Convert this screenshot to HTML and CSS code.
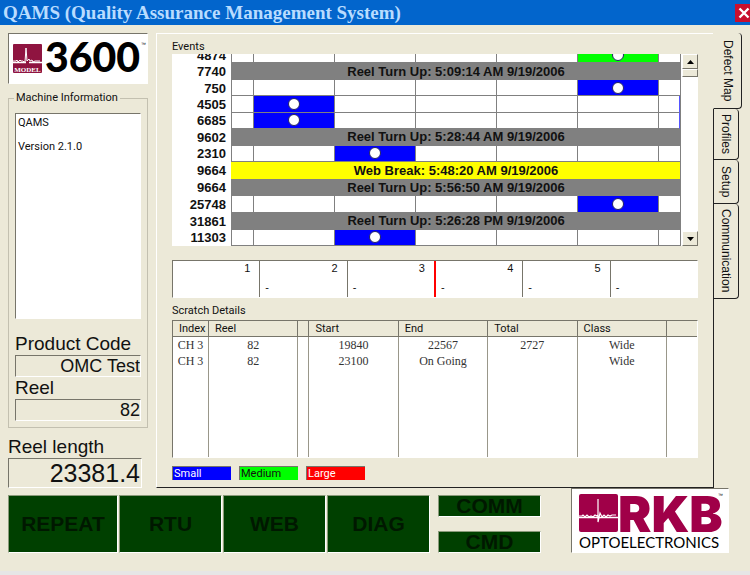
FILE: index.html
```html
<!DOCTYPE html>
<html lang="en">
<head>
<meta charset="utf-8">
<title>QAMS (Quality Assurance Management System)</title>
<link rel="stylesheet" href="styles.css">
</head>
<body>
<header class="titlebar">
  <h1>QAMS (Quality Assurance Management System)</h1>
  <button class="close" type="button" aria-label="Close"><svg viewBox="0 0 18 18" width="18" height="18"><path d="M4.5 4.5l9 9M13.5 4.5l-9 9" stroke="#fff" stroke-width="2.4" fill="none"/></svg></button>
</header>
<main class="main">
  <aside class="side">
    <div class="model sunken">
      <svg viewBox="0 0 138 48" width="138" height="48">
        <rect x="4" y="10" width="29" height="29" rx="1" fill="#8f1440"/>
        <path d="M4 27h3l1-1 1 2 2-2 1 1h2l1 1 1 0 1-14 1 13 2-2 1 2 2-1 1 2 2-1 1 0h4" fill="none" stroke="#fff" stroke-width="1"/>
        <path d="M4 28.500h13M20 28.500h13" stroke="#fff" stroke-width="1.500"/>
        <text x="18.500" y="37.500" class="model-tag">MODEL</text>
        <text x="36" y="38" class="model-num">3600</text>
        <text x="132" y="12" class="tm">™</text>
      </svg>
    </div>
    <fieldset class="info">
      <legend>Machine Information</legend>
      <textarea class="sunken" aria-label="Machine Information" readonly>QAMS

Version 2.1.0</textarea>
      <label for="code">Product Code</label>
      <input class="sunken" id="code" value="OMC Test" readonly>
      <label for="reel">Reel</label>
      <input class="sunken" id="reel" value="82" readonly>
    </fieldset>
    <div class="length">
      <label for="length">Reel length</label>
      <input class="sunken" id="length" value="23381.4" readonly>
    </div>
  </aside>
  <section class="panel">
    <h2>Events</h2>
    <div class="events">
      <table>
        <colgroup><col class="c-pos"><col class="c-edge"><col><col><col><col><col><col class="c-edge"></colgroup>
        <tbody>
          <tr><th>4874</th><td></td><td></td><td></td><td></td><td></td><td class="medium"><i></i></td><td></td></tr>
          <tr><th>7740</th><td class="turn" colspan="7">Reel Turn Up: 5:09:14 AM 9/19/2006</td></tr>
          <tr><th>750</th><td></td><td></td><td></td><td></td><td></td><td class="small"><i></i></td><td></td></tr>
          <tr><th>4505</th><td></td><td class="small"><i></i></td><td></td><td></td><td></td><td></td><td class="hit"></td></tr>
          <tr><th>6685</th><td></td><td class="small"><i></i></td><td></td><td></td><td></td><td></td><td class="hit"></td></tr>
          <tr><th>9602</th><td class="turn" colspan="7">Reel Turn Up: 5:28:44 AM 9/19/2006</td></tr>
          <tr><th>2310</th><td></td><td></td><td class="small"><i></i></td><td></td><td></td><td></td><td></td></tr>
          <tr><th>9664</th><td class="break" colspan="7">Web Break: 5:48:20 AM 9/19/2006</td></tr>
          <tr><th>9664</th><td class="turn" colspan="7">Reel Turn Up: 5:56:50 AM 9/19/2006</td></tr>
          <tr><th>25748</th><td></td><td></td><td></td><td></td><td></td><td class="small"><i></i></td><td></td></tr>
          <tr><th>31861</th><td class="turn" colspan="7">Reel Turn Up: 5:26:28 PM 9/19/2006</td></tr>
          <tr><th>11303</th><td></td><td></td><td class="small"><i></i></td><td></td><td></td><td></td><td></td></tr>
        </tbody>
      </table>
      <div class="scroll">
        <button type="button" aria-label="Scroll up"><svg viewBox="0 0 7 4" width="7" height="4"><path d="M0 4L3.500 0 7 4z"/></svg></button>
        <div class="thumb"></div>
        <button type="button" class="down" aria-label="Scroll down"><svg viewBox="0 0 7 4" width="7" height="4"><path d="M0 0h7L3.500 4z"/></svg></button>
      </div>
    </div>
    <ol class="ruler sunken">
      <li><b>1</b></li>
      <li><b>2</b><span>-</span></li>
      <li><b>3</b><span>-</span></li>
      <li class="now"><b>4</b><span>-</span></li>
      <li><b>5</b><span>-</span></li>
      <li><span>-</span></li>
    </ol>
    <h2>Scratch Details</h2>
    <table class="details sunken">
      <colgroup><col class="d-index"><col><col class="d-gap"><col><col><col><col><col class="d-end"></colgroup>
      <thead><tr><th>Index</th><th>Reel</th><th></th><th>Start</th><th>End</th><th>Total</th><th>Class</th><th></th></tr></thead>
      <tbody>
        <tr><td>CH 3</td><td>82</td><td></td><td>19840</td><td>22567</td><td>2727</td><td>Wide</td><td></td></tr>
        <tr><td>CH 3</td><td>82</td><td></td><td>23100</td><td>On Going</td><td></td><td>Wide</td><td></td></tr>
        <tr class="rest"><td></td><td></td><td></td><td></td><td></td><td></td><td></td><td></td></tr>
      </tbody>
    </table>
    <ul class="legend">
      <li class="small">Small</li>
      <li class="medium">Medium</li>
      <li class="large">Large</li>
    </ul>
  </section>
  <nav class="tabs">
    <button type="button" class="active">Defect Map</button>
    <button type="button">Profiles</button>
    <button type="button">Setup</button>
    <button type="button">Communication</button>
  </nav>
</main>
<footer class="bottom">
  <div class="status">
    <button type="button">REPEAT</button>
    <button type="button">RTU</button>
    <button type="button">WEB</button>
    <button type="button">DIAG</button>
  </div>
  <div class="comms">
    <button type="button">COMM</button>
    <button type="button">CMD</button>
  </div>
  <div class="brand sunken">
    <svg viewBox="0 0 156 63" width="156" height="63">
      <rect x="7" y="5" width="39" height="38" rx="2" fill="#a00048"/>
      <path d="M7 27h3l1-1 2 2 2-2 2 2 2-1 2 1 2-2 2 1 1-1V10v23l2-9 2 4 2-2 2 2 2-2 2 1 2-1h4" fill="none" stroke="#fff" stroke-width="1.200"/>
      <path d="M7 28.500h39" stroke="#fff" stroke-width="1.500"/>
      <text x="46" y="43" class="rkb">RKB</text>
      <text x="146" y="8" class="tm">™</text>
      <text x="7" y="59" class="opto">OPTOELECTRONICS</text>
    </svg>
  </div>
</footer>
</body>
</html>
```
FILE: styles.css
```css
* { box-sizing: border-box; }

body {
  margin: 0;
  min-height: 100vh;
  display: flex;
  flex-direction: column;
  background: #ece9d8;
  border-bottom: 4px solid #e6e6e6;
  color: #111;
  font: 11px/14px Roboto, "Liberation Sans", sans-serif;
  overflow: hidden;
}

button, input, textarea { font: inherit; color: inherit; border-radius: 0; margin: 0; }
button { padding: 0; }
svg { display: block; overflow: visible; }

.sunken {
  border: 1px solid #fff;
  border-top-color: #77756a;
  border-left-color: #77756a;
}

.titlebar {
  display: flex;
  align-items: center;
  justify-content: space-between;
  height: 25px;
  padding-left: 3px;
  background: #0265cc;
}
.titlebar h1 {
  margin: 0;
  color: #b9dcff;
  font: bold 19px/24px Georgia, "Liberation Serif", serif;
  white-space: nowrap;
}
.close {
  flex: none;
  width: 18px;
  height: 18px;
  margin-right: -3px;
  border: 0;
  background: #c8102e;
}

.main { display: flex; padding: 8px 8px 0; }

.side { width: 140px; margin-right: 8px; flex: none; }
.model { height: 51px; background: #fff; }
.model-num { font: 900 41px Lato, sans-serif; }
.model-tag { font: bold 7px "Liberation Serif", serif; fill: #fff; text-anchor: middle; }
.tm { font: 5px "Liberation Sans", sans-serif; }

.info {
  display: flex;
  flex-direction: column;
  margin: 7px 0 0;
  padding: 8px 6px 6px;
  border: 1px solid #c3c0b0;
  min-width: 0;
}
.info legend { margin-left: -1px; padding: 0 2px; }
.info textarea {
  height: 206px;
  padding: 3px 2px;
  background: #fff;
  line-height: 12px;
  resize: none;
  outline: 0;
}
.side label {
  display: block;
  font: 19px/22px "Liberation Sans", sans-serif;
}
.side input {
  display: block;
  width: 100%;
  height: 22px;
  padding: 0;
  background: transparent;
  font: 18px/20px "Liberation Sans", sans-serif;
  text-align: right;
}
.info label[for="code"] { margin-top: 14px; }
.length { margin: 8px 6px 0 0; }
.length input { height: 30px; padding-right: 1px; font-size: 25px; line-height: 28px; }

.panel {
  flex: 1;
  min-width: 0;
  padding: 6px 15px 7px;
  border: 1px solid #fff;
  border-right-color: #222;
  border-bottom-color: #222;
}
.panel h2 { margin: 0; font-size: 11px; line-height: 14px; font-weight: normal; }

.small { background: #00f; }
.medium { background: #0f0; }
.large { background: #f00; }

.events {
  display: flex;
  align-items: flex-end;
  height: 192px;
  background: #fff;
  overflow: hidden;
}
.events table {
  flex: 1;
  width: 100%;
  height: 199px;
  table-layout: fixed;
  border-collapse: separate;
  border-spacing: 0;
  border-right: 1px solid #808080;
}
.c-pos { width: 59px; }
.c-edge { width: 22px; }
.events th, .events td {
  padding: 0;
  font: bold 13px/15px "Liberation Sans", sans-serif;
}
.events th { padding-right: 5px; text-align: right; }
.events td {
  border-left: 1px solid #808080;
  border-bottom: 1px solid #808080;
  text-align: center;
}
.events .turn { background: #808080; }
.events .break { background: #ff0; border-color: #ff0; }
.events .hit { border-right: 1px solid #55f; }
.events i {
  display: block;
  width: 12px;
  height: 12px;
  margin: 0 auto;
  border: 1px solid #226;
  border-radius: 50%;
  background: #fff;
}
.scroll {
  flex: none;
  display: flex;
  flex-direction: column;
  width: 16px;
  height: 100%;
  margin-left: 1px;
}
.scroll button, .thumb {
  display: flex;
  align-items: center;
  justify-content: center;
  height: 15px;
  background: #ece9d8;
  border: 1px solid #fff;
  border-right-color: #77756a;
  border-bottom-color: #77756a;
}
.thumb { height: 8px; }
.scroll .down { margin-top: auto; }

.ruler {
  display: flex;
  height: 38px;
  margin: 14px 0 6px;
  padding: 0;
  list-style: none;
  background: #fff;
  font: 11px/14px "Liberation Sans", sans-serif;
}
.ruler li {
  flex: 1;
  display: flex;
  flex-direction: column;
  border-left: 1px solid #77756a;
  padding: 0 9px 0 5px;
}
.ruler li:first-child { border: 0; }
.ruler .now { border-left: 2px solid #f00; }
.ruler b { font-weight: normal; text-align: right; }
.ruler span { margin-top: auto; line-height: 20px; }

.details {
  width: 100%;
  height: 138px;
  margin-top: 2px;
  table-layout: fixed;
  border-collapse: separate;
  border-spacing: 0;
  background: #fff;
}
.d-index { width: 36px; }
.d-gap { width: 11px; }
.d-end { width: 30px; }
.details th {
  height: 16px;
  padding: 0 0 0 6px;
  background: #ece9d8;
  border-right: 1px solid #77756a;
  border-bottom: 1px solid #77756a;
  font-weight: normal;
  line-height: 14px;
  text-align: left;
}
.details td {
  height: 16px;
  padding: 0;
  border-right: 1px solid #99978a;
  color: #333;
  font: 12px/16px Georgia, "Liberation Serif", serif;
  text-align: center;
}
.details th:last-child, .details td:last-child { border-right: 0; }
.details .rest td { height: auto; }

.legend {
  display: flex;
  gap: 8px;
  margin: 8px 0 0;
  padding: 0;
  list-style: none;
}
.legend li {
  width: 59px;
  height: 14px;
  padding-left: 1px;
  border-top: 1px solid #77756a;
  border-left: 1px solid #77756a;
}
.legend .small, .legend .large { color: #fff; }

.tabs { flex: none; width: 28px; }
.tabs button {
  display: block;
  width: 26px;
  height: 51px;
  margin-left: -1px;
  border: 1px solid #222;
  border-top-width: 0;
  border-radius: 0 4px 4px 0;
  background: #ece9d8;
  font: 12px/22px "Liberation Sans", sans-serif;
  writing-mode: vertical-rl;
}
.tabs .active {
  width: 29px;
  height: 76px;
  border-left-color: #ece9d8;
}
.tabs button:nth-child(3) { height: 44px; }
.tabs button:nth-child(4) { height: 95px; }

.bottom {
  display: flex;
  align-items: flex-end;
  padding: 0 21px 0 8px;
}
.bottom button {
  background: #004000;
  border: 1px solid #fff;
  border-top-color: #8a9a7a;
  border-left-color: #8a9a7a;
  color: #001800;
  font: bold 21px/18px "Liberation Sans", sans-serif;
}
.status { flex: 1; display: flex; gap: 1px; }
.status button { flex: 1; height: 58px; }
.status button:first-child { flex: 0 0 110px; }
.comms {
  display: flex;
  flex-direction: column;
  gap: 14px;
  width: 103px;
  margin: 0 30px 0 8px;
}
.comms button { height: 22px; }
.brand { width: 158px; height: 65px; background: #fff; }
.rkb { font: 900 50px Inter, sans-serif; fill: #a00048; }
.opto { font: 15px Lato, sans-serif; }
```
